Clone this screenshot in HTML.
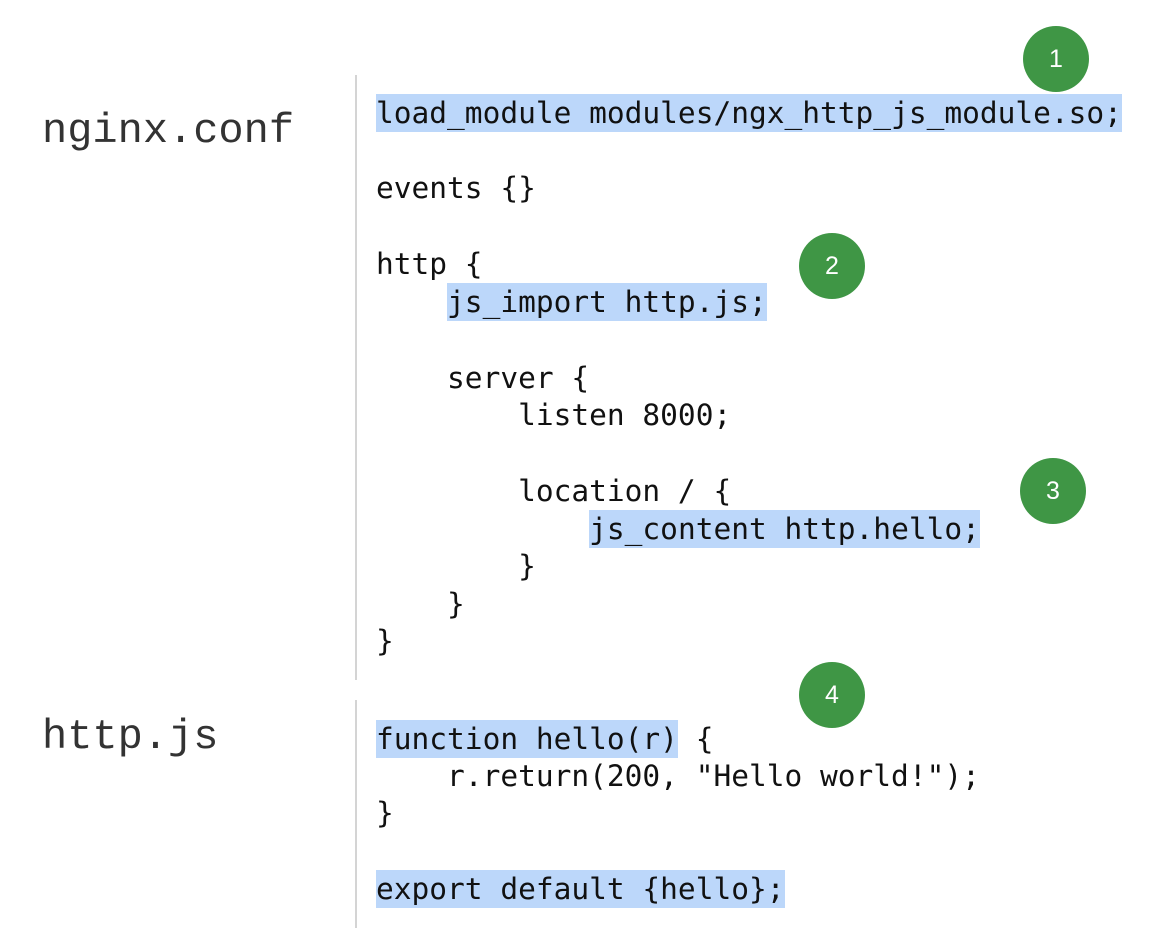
<!DOCTYPE html>
<html><head><meta charset="utf-8"><style>
body{margin:0;width:1172px;height:934px;background:#fff;position:relative;overflow:hidden}
.l{position:absolute;left:376px;height:38px;line-height:38px;font-family:"DejaVu Sans Mono","Liberation Mono",monospace;font-size:29.5px;color:#111;white-space:pre}
.h{background:#bcd7fa;display:inline-block;height:38px}
.lab{position:absolute;left:42px;font-family:"Liberation Mono",monospace;font-size:42px;color:#333;white-space:pre;line-height:50px}
.vl{position:absolute;left:355px;width:2px;background:#d4d4d4}
.c{position:absolute;width:66px;height:66px;border-radius:50%;background:#3f9645;color:#fff;font-family:"Liberation Sans",sans-serif;font-size:25px;text-align:center;line-height:66px}
</style></head><body>
<div class="lab" style="top:106px">nginx.conf</div>
<div class="lab" style="top:712px">http.js</div>
<div class="vl" style="top:75px;height:605px"></div>
<div class="vl" style="top:700px;height:228px"></div>
<div class="l" style="top:94px"><span class="h">load_module modules/ngx_http_js_module.so;</span></div>
<div class="l" style="top:169px">events {}</div>
<div class="l" style="top:245px">http {</div>
<div class="l" style="top:283px">    <span class="h">js_import http.js;</span></div>
<div class="l" style="top:359px">    server {</div>
<div class="l" style="top:396px">        listen 8000;</div>
<div class="l" style="top:472px">        location / {</div>
<div class="l" style="top:510px">            <span class="h">js_content http.hello;</span></div>
<div class="l" style="top:547px">        }</div>
<div class="l" style="top:585px">    }</div>
<div class="l" style="top:622px">}</div>
<div class="l" style="top:720px"><span class="h">function hello(r)</span> {</div>
<div class="l" style="top:757px">    r.return(200, "Hello world!");</div>
<div class="l" style="top:794px">}</div>
<div class="l" style="top:870px"><span class="h">export default {hello};</span></div>
<div class="c" style="left:1023px;top:26px">1</div>
<div class="c" style="left:799px;top:233px">2</div>
<div class="c" style="left:1020px;top:458px">3</div>
<div class="c" style="left:799px;top:662px">4</div>
</body></html>
